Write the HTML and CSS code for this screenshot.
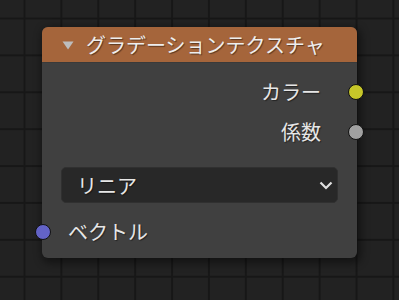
FILE: index.html
```html
<!DOCTYPE html>
<html lang="ja">
<head>
    <meta charset="UTF-8" />
    <title>グラデーションテクスチャ</title>
    <link rel="stylesheet" href="styles.css">
</head>
<body>
    <div class="node">
        <div class="node-header">
            <svg class="collapse" width="12" height="9" viewBox="0 0 12 9">
                <path d="M0.5 0.5 L11.5 0.5 L6 8.5 Z" fill="#bdbdbd"/>
            </svg>
            <span class="node-title">グラデーションテクスチャ</span>
        </div>
        <div class="node-body">
            <div class="row output">
                <span class="label">カラー</span>
                <span class="socket socket-color"></span>
            </div>
            <div class="row output">
                <span class="label">係数</span>
                <span class="socket socket-float"></span>
            </div>
            <div class="dropdown">
                <span>リニア</span>
                <svg width="14" height="9" viewBox="0 0 14 9">
                    <path d="M1.5 1.5 L7 7 L12.5 1.5" fill="none" stroke="#e0e0e0" stroke-width="2.2"/>
                </svg>
            </div>
            <div class="row input">
                <span class="socket socket-vector"></span>
                <span class="label">ベクトル</span>
            </div>
        </div>
    </div>
</body>
</html>
```

FILE: styles.css
```css
body {
    margin: 0;
    width: 399px;
    height: 300px;
    overflow: hidden;
    background-color: #222222;
    background-image:
        linear-gradient(to right, #171717 1.5px, transparent 1.5px),
        linear-gradient(to bottom, #171717 1.5px, transparent 1.5px);
    background-size: 36.9px 36.9px;
    background-position: 23.5px 17.5px;
    font-family: "Noto Sans CJK JP", "Noto Sans", sans-serif;
    color: #e6e6e6;
    padding: 27px 0 0 42px;
    box-sizing: border-box;
}
.node {
    width: 315px;
    height: 231px;
    background: #404040;
    border-radius: 6px;
    box-shadow: 2px 3px 8px 2px rgba(0, 0, 0, 0.45);
}
.node-header {
    height: 36px;
    background: #a5653b;
    border-radius: 6px 6px 0 0;
    display: flex;
    align-items: center;
    padding-left: 20px;
    border-bottom: 1px solid #3a3a3a;
    box-sizing: border-box;
}
.collapse {
    margin-right: 12px;
    margin-top: 1px;
}
.node-title {
    font-size: 20px;
    color: #eeeeee;
    text-shadow: 1px 1px 1px rgba(0, 0, 0, 0.45);
    line-height: 1;
}
.node-body {
    padding-top: 8px;
}
.row {
    height: 40px;
    display: flex;
    align-items: center;
    position: relative;
    font-size: 20px;
    text-shadow: 1px 1px 1px rgba(0, 0, 0, 0.45);
}
.row.output {
    justify-content: flex-end;
    padding-right: 36px;
}
.row.input {
    padding-left: 26px;
}
.socket {
    position: absolute;
    width: 14px;
    height: 14px;
    border-radius: 50%;
    border: 1px solid #111111;
    top: 13px;
}
.output .socket {
    right: -7px;
}
.input .socket {
    left: -7px;
}
.socket-color {
    background: #c7c729;
}
.socket-float {
    background: #a1a1a1;
}
.socket-vector {
    background: #6363c7;
}
.dropdown {
    margin: 16px 19px 8px 19px;
    height: 36px;
    background: #282828;
    border: 1px solid #303030;
    border-radius: 5px;
    box-sizing: border-box;
    display: flex;
    align-items: center;
    justify-content: space-between;
    padding: 0 4px 0 15px;
    font-size: 20px;
    text-shadow: 1px 1px 1px rgba(0, 0, 0, 0.45);
}
```
